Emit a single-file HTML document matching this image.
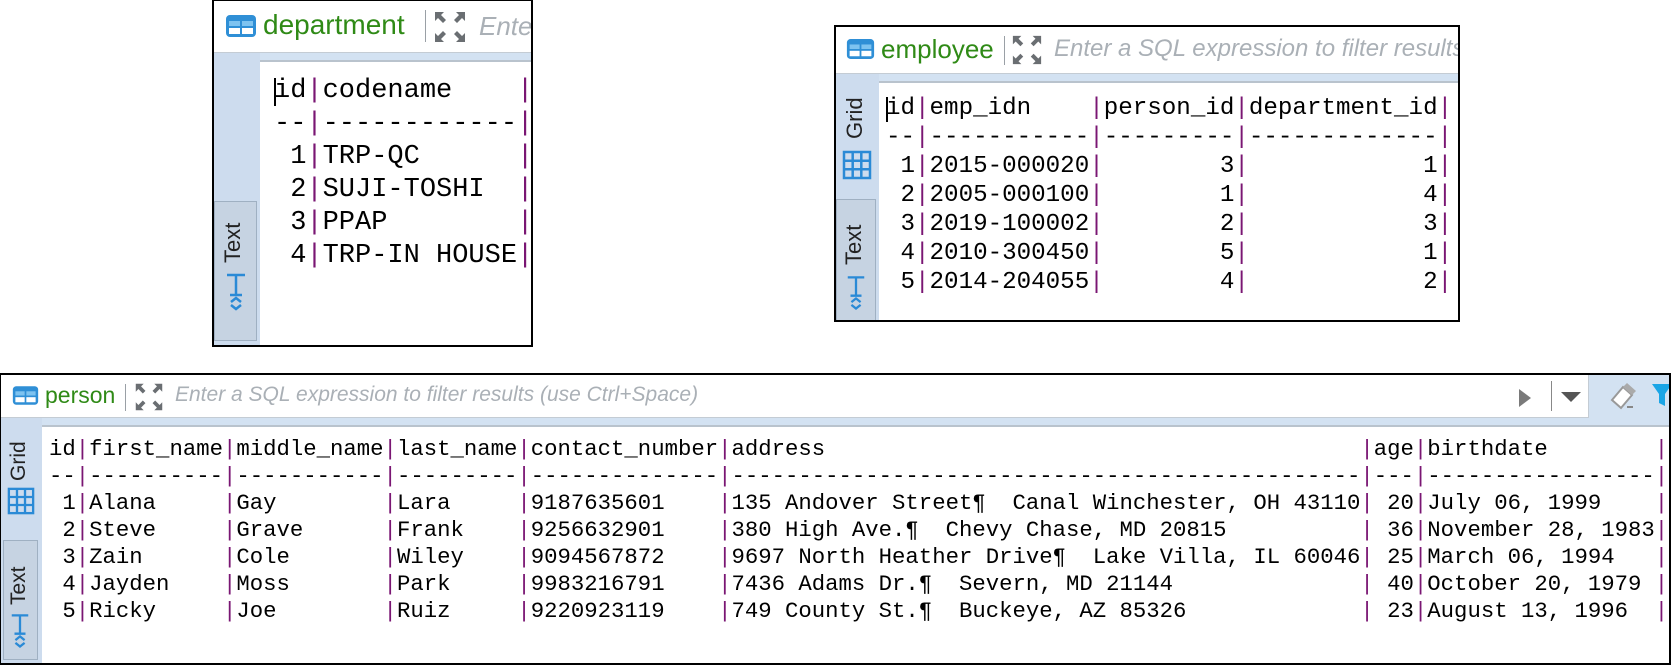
<!DOCTYPE html>
<html><head><meta charset="utf-8">
<style>
*{margin:0;padding:0;box-sizing:border-box}
body{width:1672px;height:665px;background:#fff;position:relative;overflow:hidden;font-family:"Liberation Sans",sans-serif}
.p{position:absolute;border:2px solid #000;background:#fff;overflow:hidden}
.hd{position:absolute;left:0;right:0;top:0;background:#fff;border-bottom:1px solid #c4ccd4}
.strip{position:absolute;left:0;right:0;background:#d3e2f2}
.side{position:absolute;left:0;background:#cddcee}
.cline{position:absolute;right:0;height:2px;background:#b9c3cd}
.lbl{position:absolute;color:#2f8a16;white-space:nowrap}
.ph{position:absolute;color:#aab0b6;font-style:italic;white-space:nowrap}
.sep{position:absolute;width:1px;background:#9aa0a6}
pre{position:absolute;font-family:"Liberation Mono",monospace;color:#000;white-space:pre}
pre b{font-weight:normal;color:#7a1673}
.tab{position:absolute;border:1px solid #9fb0c2;background:#c6d3e2}
.vt{position:absolute;transform:rotate(-90deg);transform-origin:left top;white-space:nowrap;color:#222}
.cur{position:absolute;width:2px;background:#000}
</style></head><body>

<!-- department -->
<div class="p" style="left:212px;top:-1px;width:321px;height:348px">
 <div class="hd" style="height:52px"></div>
 <svg style="position:absolute;left:11px;top:13px" width="32" height="24" viewBox="0 0 32 24"><rect x="1" y="1" width="30" height="22" rx="4" fill="#2f8fd6"/><rect x="4" y="7" width="11" height="5" fill="#7ec3f0"/><rect x="17" y="7" width="11" height="5" fill="#7ec3f0"/><rect x="4" y="14" width="11" height="6" fill="#fff"/><rect x="17" y="14" width="11" height="6" fill="#fff"/></svg>
 <div class="lbl" style="left:49px;top:8px;font-size:28px">department</div>
 <div class="sep" style="left:211px;top:9px;height:32px"></div>
 <svg style="position:absolute;left:219px;top:9px" width="34" height="34" viewBox="0 0 34 34" fill="#6a6e72"><path d="M2 2h9l-3 3 5 5-3 3-5-5-3 3z"/><path d="M32 2h-9l3 3-5 5 3 3 5-5 3 3z"/><path d="M2 32h9l-3-3 5-5-3-3-5 5-3-3z"/><path d="M32 32h-9l3-3-5-5 3-3 5 5 3-3z"/></svg>
 <div class="ph" style="left:265px;top:10px;font-size:26px">Enter a SQL</div>
 <div class="strip" style="top:52px;height:8px"></div>
 <div class="side" style="top:52px;width:46px;height:300px"></div>
 <div class="cline" style="left:46px;top:59px"></div>
 <div class="tab" style="left:0;top:200px;width:43px;height:140px"></div>
 <div class="vt" style="left:6px;top:262px;font-size:22px">Text</div>
 <svg style="position:absolute;left:10px;top:270px" width="24" height="40" viewBox="0 0 24 40" fill="none" stroke="#2a8ad6" stroke-width="2.5"><path d="M3 4h18M12 4v20M6 24h12"/><path d="M7 31l5-4 5 4M7 34l5 4 5-4"/></svg>
 <pre style="left:60px;top:74px;font-size:27px;line-height:33px">id<b>|</b>codename    <b>|</b>
--<b>|</b>------------<b>|</b>
 1<b>|</b>TRP-QC      <b>|</b>
 2<b>|</b>SUJI-TOSHI  <b>|</b>
 3<b>|</b>PPAP        <b>|</b>
 4<b>|</b>TRP-IN HOUSE<b>|</b></pre>
 <div class="cur" style="left:60px;top:77px;height:28px"></div>
</div>

<!-- employee -->
<div class="p" style="left:834px;top:25px;width:626px;height:297px">
 <div class="hd" style="height:47px"></div>
 <svg style="position:absolute;left:10px;top:11px" width="29" height="22" viewBox="0 0 32 24"><rect x="1" y="1" width="30" height="22" rx="4" fill="#2f8fd6"/><rect x="4" y="7" width="11" height="5" fill="#7ec3f0"/><rect x="17" y="7" width="11" height="5" fill="#7ec3f0"/><rect x="4" y="14" width="11" height="6" fill="#fff"/><rect x="17" y="14" width="11" height="6" fill="#fff"/></svg>
 <div class="lbl" style="left:45px;top:7px;font-size:26px">employee</div>
 <div class="sep" style="left:168px;top:9px;height:29px"></div>
 <svg style="position:absolute;left:175px;top:7px" width="32" height="32" viewBox="0 0 34 34" fill="#6a6e72"><path d="M2 2h9l-3 3 5 5-3 3-5-5-3 3z"/><path d="M32 2h-9l3 3-5 5 3 3 5-5 3 3z"/><path d="M2 32h9l-3-3 5-5-3-3-5 5-3-3z"/><path d="M32 32h-9l3-3-5-5 3-3 5 5 3-3z"/></svg>
 <div class="ph" style="left:218px;top:8px;font-size:24px">Enter a SQL expression to filter results</div>
 <div class="strip" style="top:47px;height:8px"></div>
 <div class="side" style="top:47px;width:43px;height:260px"></div>
 <div class="cline" style="left:43px;top:54px"></div>
 <div class="vt" style="left:6px;top:112px;font-size:22px">Grid</div>
 <svg style="position:absolute;left:6px;top:123px" width="30" height="30" viewBox="0 0 30 30" fill="none" stroke="#2a8ad6" stroke-width="2.5"><rect x="2" y="2" width="26" height="26"/><path d="M10.7 2v26M19.3 2v26M2 10.7h26M2 19.3h26"/></svg>
 <div class="tab" style="left:0;top:172px;width:40px;height:130px"></div>
 <div class="vt" style="left:5px;top:238px;font-size:22px">Text</div>
 <svg style="position:absolute;left:9px;top:246px" width="22" height="38" viewBox="0 0 24 40" fill="none" stroke="#2a8ad6" stroke-width="2.5"><path d="M3 4h18M12 4v20M6 24h12"/><path d="M7 31l5-4 5 4M7 34l5 4 5-4"/></svg>
 <pre style="left:50px;top:67px;font-size:24.2px;line-height:29px">id<b>|</b>emp_idn    <b>|</b>person_id<b>|</b>department_id<b>|</b>
--<b>|</b>-----------<b>|</b>---------<b>|</b>-------------<b>|</b>
 1<b>|</b>2015-000020<b>|</b>        3<b>|</b>            1<b>|</b>
 2<b>|</b>2005-000100<b>|</b>        1<b>|</b>            4<b>|</b>
 3<b>|</b>2019-100002<b>|</b>        2<b>|</b>            3<b>|</b>
 4<b>|</b>2010-300450<b>|</b>        5<b>|</b>            1<b>|</b>
 5<b>|</b>2014-204055<b>|</b>        4<b>|</b>            2<b>|</b></pre>
 <div class="cur" style="left:50px;top:70px;height:25px"></div>
</div>

<!-- person -->
<div class="p" style="left:-1px;top:373px;width:1672px;height:292px">
 <div class="hd" style="height:43px;right:80px;border-right:1px solid #c4ccd4"></div>
 <div style="position:absolute;right:0;top:0;width:80px;height:43px;background:#d3e2f2"></div>
 <svg style="position:absolute;left:11px;top:10px" width="27" height="21" viewBox="0 0 32 24"><rect x="1" y="1" width="30" height="22" rx="4" fill="#2f8fd6"/><rect x="4" y="7" width="11" height="5" fill="#7ec3f0"/><rect x="17" y="7" width="11" height="5" fill="#7ec3f0"/><rect x="4" y="14" width="11" height="6" fill="#fff"/><rect x="17" y="14" width="11" height="6" fill="#fff"/></svg>
 <div class="lbl" style="left:44px;top:7px;font-size:23px">person</div>
 <div class="sep" style="left:124px;top:9px;height:27px"></div>
 <svg style="position:absolute;left:133px;top:7px" width="30" height="30" viewBox="0 0 34 34" fill="#6a6e72"><path d="M2 2h9l-3 3 5 5-3 3-5-5-3 3z"/><path d="M32 2h-9l3 3-5 5 3 3 5-5 3 3z"/><path d="M2 32h9l-3-3 5-5-3-3-5 5-3-3z"/><path d="M32 32h-9l3-3-5-5 3-3 5 5 3-3z"/></svg>
 <div class="ph" style="left:174px;top:8px;font-size:21px">Enter a SQL expression to filter results (use Ctrl+Space)</div>
 <svg style="position:absolute;left:1517px;top:13px" width="14" height="20"><path d="M1 1l12 9-12 9z" fill="#7a7a7a"/></svg>
 <div class="sep" style="left:1550px;top:6px;height:30px;background:#888"></div>
 <svg style="position:absolute;left:1560px;top:17px" width="20" height="10"><path d="M0 0h20l-10 10z" fill="#555"/></svg>
 <svg style="position:absolute;left:1608px;top:7px" width="30" height="28" viewBox="0 0 30 28"><path d="M3 18l11-13 9 8-11 13z" fill="#fff" stroke="#999" stroke-width="2"/><path d="M14 5l4-4 9 8-4 4z" fill="#aaa"/><path d="M18 25h6" stroke="#888" stroke-width="2"/></svg>
 <svg style="position:absolute;left:1650px;top:7px" width="22" height="28" viewBox="0 0 22 28"><path d="M1 2h20l-7 10v12l-6-3v-9z" fill="#1aa5e6"/></svg>
 <div class="strip" style="top:43px;height:8px"></div>
 <div class="side" style="top:43px;width:41px;height:250px"></div>
 <div class="cline" style="left:41px;top:50px"></div>
 <div class="vt" style="left:6px;top:106px;font-size:21px">Grid</div>
 <svg style="position:absolute;left:6px;top:112px" width="28" height="28" viewBox="0 0 30 30" fill="none" stroke="#2a8ad6" stroke-width="2.5"><rect x="2" y="2" width="26" height="26"/><path d="M10.7 2v26M19.3 2v26M2 10.7h26M2 19.3h26"/></svg>
 <div class="tab" style="left:2px;top:165px;width:35px;height:120px"></div>
 <div class="vt" style="left:6px;top:230px;font-size:21px">Text</div>
 <svg style="position:absolute;left:8px;top:236px" width="22" height="38" viewBox="0 0 24 40" fill="none" stroke="#2a8ad6" stroke-width="2.5"><path d="M3 4h18M12 4v20M6 24h12"/><path d="M7 31l5-4 5 4M7 34l5 4 5-4"/></svg>
 <pre style="left:48px;top:61px;font-size:22.3px;line-height:27px">id<b>|</b>first_name<b>|</b>middle_name<b>|</b>last_name<b>|</b>contact_number<b>|</b>address                                        <b>|</b>age<b>|</b>birthdate        <b>|</b>
--<b>|</b>----------<b>|</b>-----------<b>|</b>---------<b>|</b>--------------<b>|</b>-----------------------------------------------<b>|</b>---<b>|</b>-----------------<b>|</b>
 1<b>|</b>Alana     <b>|</b>Gay        <b>|</b>Lara     <b>|</b>9187635601    <b>|</b>135 Andover Street¶  Canal Winchester, OH 43110<b>|</b> 20<b>|</b>July 06, 1999    <b>|</b>
 2<b>|</b>Steve     <b>|</b>Grave      <b>|</b>Frank    <b>|</b>9256632901    <b>|</b>380 High Ave.¶  Chevy Chase, MD 20815          <b>|</b> 36<b>|</b>November 28, 1983<b>|</b>
 3<b>|</b>Zain      <b>|</b>Cole       <b>|</b>Wiley    <b>|</b>9094567872    <b>|</b>9697 North Heather Drive¶  Lake Villa, IL 60046<b>|</b> 25<b>|</b>March 06, 1994   <b>|</b>
 4<b>|</b>Jayden    <b>|</b>Moss       <b>|</b>Park     <b>|</b>9983216791    <b>|</b>7436 Adams Dr.¶  Severn, MD 21144              <b>|</b> 40<b>|</b>October 20, 1979 <b>|</b>
 5<b>|</b>Ricky     <b>|</b>Joe        <b>|</b>Ruiz     <b>|</b>9220923119    <b>|</b>749 County St.¶  Buckeye, AZ 85326             <b>|</b> 23<b>|</b>August 13, 1996  <b>|</b></pre>
</div>

</body></html>
